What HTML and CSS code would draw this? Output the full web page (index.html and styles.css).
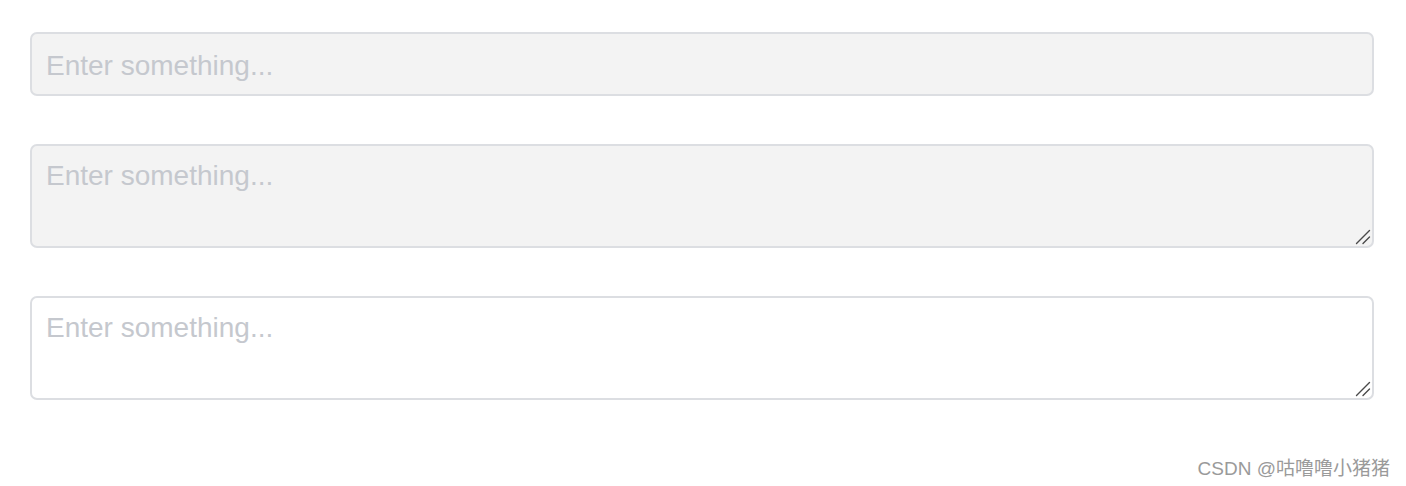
FILE: index.html
```html
<!DOCTYPE html>
<html lang="zh">
<head>
<meta charset="utf-8">
<link rel="stylesheet" href="styles.css">
</head>
<body>
<div class="page">
  <input class="field field-input" type="text" placeholder="Enter something..." disabled>
  <div class="area-wrap">
    <textarea class="field field-area" rows="2" placeholder="Enter something..." disabled></textarea>
    <svg class="grip" width="16" height="16" viewBox="0 0 16 16"><path d="M1.5 14.5 L14.5 1.5 M8 14.5 L14.5 8" stroke="#4a4a4a" stroke-width="1.4" stroke-linecap="round" fill="none"/></svg>
  </div>
  <div class="area-wrap">
    <textarea class="field field-area" rows="2" placeholder="Enter something..."></textarea>
    <svg class="grip" width="16" height="16" viewBox="0 0 16 16"><path d="M1.5 14.5 L14.5 1.5 M8 14.5 L14.5 8" stroke="#4a4a4a" stroke-width="1.4" stroke-linecap="round" fill="none"/></svg>
  </div>
</div>
<div class="watermark">CSDN @咕噜噜小猪猪</div>
</body>
</html>
```

FILE: styles.css
```css
html, body {
  margin: 0;
  padding: 0;
  background: #ffffff;
}
body {
  font-family: "Liberation Sans", Arial, sans-serif;
  position: relative;
  width: 1406px;
  height: 486px;
  overflow: hidden;
}
.page {
  display: flex;
  flex-direction: column;
  gap: 48px;
  padding: 32px 32px 0 30px;
}
.field {
  box-sizing: border-box;
  display: block;
  width: 1344px;
  margin: 0;
  border: 2px solid #dcdee2;
  border-radius: 7px;
  background: #ffffff;
  color: #515a6e;
  font-family: "Liberation Sans", Arial, sans-serif;
  font-size: 28px;
  outline: none;
}
.field:disabled {
  background: #f3f3f3;
  opacity: 1;
}
.field::placeholder {
  color: #c5c8ce;
  opacity: 1;
}
.field-input {
  height: 64px;
  line-height: 44px;
  padding: 10px 14px 6px;
}
.area-wrap {
  position: relative;
  width: 1344px;
  height: 104px;
}
.field-area {
  height: 104px;
  line-height: 42px;
  padding: 9px 14px 7px;
  resize: none;
}
.grip {
  position: absolute;
  right: 3px;
  bottom: 3px;
  pointer-events: none;
}
.watermark {
  position: absolute;
  right: 16px;
  top: 453px;
  font-family: "Liberation Sans", "Noto Sans CJK SC", sans-serif;
  font-size: 19px;
  color: #9a9a9a;
}
```
